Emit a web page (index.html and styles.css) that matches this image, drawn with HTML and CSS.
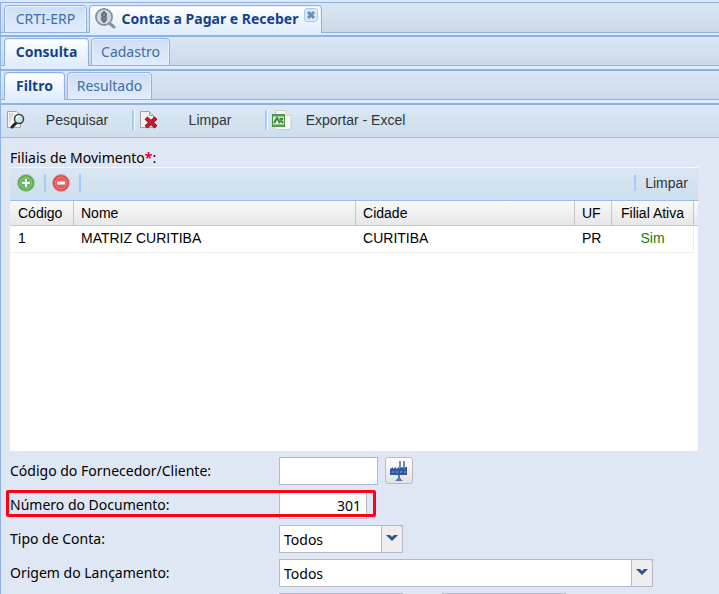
FILE: index.html
```html
<!DOCTYPE html>
<html lang="pt-BR">
  <head>
    <meta charset="UTF-8" />
    <meta name="viewport" content="width=device-width, initial-scale=1.0" />
    <title>CRTI-ERP</title>
    <link rel="stylesheet" href="styles.css">
  </head>
  <body>
    <div class="window">
      <nav class="tabs tabs-main">
        <button type="button" class="tab tab-home">CRTI-ERP</button>
        <div class="tab tab-page active">
          <svg class="tab-icon" width="22" height="22" viewBox="0 0 22 22">
            <path d="M14 14l6 5" stroke="#8b919b" stroke-width="3" stroke-linecap="round" />
            <circle cx="10" cy="9" r="8" fill="#e3e8ee" stroke="#8792a1" stroke-width="2" />
            <circle cx="10" cy="9" r="6" fill="#cbd4de" />
            <path d="M10 3v12" stroke="#63707f" stroke-width="2" />
            <ellipse cx="10" cy="7" rx="2" ry="2" fill="#8a96a4" stroke="#63707f" stroke-width="2" />
            <ellipse cx="10" cy="11" rx="2" ry="2" fill="#8a96a4" stroke="#63707f" stroke-width="2" />
          </svg>
          <button type="button" class="tab-title">Contas a Pagar e Receber</button>
          <button type="button" class="tab-close" aria-label="Fechar">
            <svg width="14" height="14" viewBox="0 0 14 14">
              <rect x="0.500" y="0.500" width="13" height="13" rx="3" fill="#dce9f8" stroke="#a9c6e8" />
              <path d="M4 4l6 6M10 4l-6 6" stroke="#6c8fba" stroke-width="3" />
            </svg>
          </button>
        </div>
      </nav>
      <nav class="tabs">
        <button type="button" class="tab tab-consulta active">Consulta</button>
        <button type="button" class="tab tab-cadastro">Cadastro</button>
      </nav>
      <nav class="tabs">
        <button type="button" class="tab tab-filtro active">Filtro</button>
        <button type="button" class="tab tab-resultado">Resultado</button>
      </nav>

      <div class="toolbar">
        <button type="button" class="tool tool-search">
          <svg width="20" height="20" viewBox="0 0 20 20">
            <path d="M1.500 1.500h9l4 4v12h-13z" fill="#f4f4f4" stroke="#a2a2a2" />
            <path d="M3 15V3h5z" fill="#d9d9d9" />
            <path d="M10 13l-4 4" stroke="#222" stroke-width="3" stroke-linecap="round" />
            <circle cx="13" cy="9" r="4.500" fill="#c4e5f2" stroke="#353b40" stroke-width="1.500" />
            <path d="M10.500 9c0-2 1-3 3-3" fill="none" stroke="#fff" stroke-width="1.500" />
          </svg>
          <span>Pesquisar</span>
        </button>
        <button type="button" class="tool tool-clear">
          <svg width="20" height="20" viewBox="0 0 20 20">
            <path d="M1.500 1.500h9l4 4v12h-13z" fill="#f1f1f1" stroke="#a2a2a2" />
            <path d="M10.500 1.500v4h4" fill="#d6d6d6" stroke="#a2a2a2" />
            <path d="M7 8l10 9M17 8L7 17" stroke="#5c1018" stroke-width="4" />
            <path d="M7 8l10 9M17 8L7 17" stroke="#cf1730" stroke-width="3" />
          </svg>
          <span>Limpar</span>
        </button>
        <button type="button" class="tool tool-excel">
          <svg width="20" height="20" viewBox="0 0 20 20">
            <path d="M4 .5h10l5 5v12q0 2-2 2H5q-2 0-2-2z" fill="#f8f8f6" stroke="#c9c9c7" />
            <path d="M14 .5v5h5" fill="#e8e8e8" stroke="#d2d2d0" />
            <rect x="0.500" y="4.500" width="12" height="12" fill="#dcebd4" stroke="#4d8f43" />
            <path d="M1 5.500h11M1 15.500h11" stroke="#5da053" stroke-width="2" />
            <path d="M2 13l3-5 3 5M7 13l4-5M8 8l3 5" fill="none" stroke="#3f8a3b" stroke-width="2" />
          </svg>
          <span>Exportar - Excel</span>
        </button>
      </div>

      <main class="panel">
        <p class="grid-label">Filiais de Movimento<b class="required">*</b>:</p>
        <section class="grid">
          <div class="grid-toolbar">
            <button type="button" class="round" aria-label="Adicionar">
              <svg width="18" height="18" viewBox="0 0 18 18">
                <circle cx="9" cy="9" r="8.500" fill="#58a94c" stroke="#a6c9a5" />
                <circle cx="9" cy="9" r="6" fill="#6fb862" stroke="#8fcb84" />
                <path d="M9 5v8M5 9h8" stroke="#fff" stroke-width="2" />
              </svg>
            </button>
            <button type="button" class="round" aria-label="Remover">
              <svg width="18" height="18" viewBox="0 0 18 18">
                <circle cx="9" cy="9" r="8.500" fill="#dc4548" stroke="#dca6ae" />
                <circle cx="9" cy="9" r="6" fill="#e95c5d" stroke="#ee8585" />
                <path d="M5 9h8" stroke="#fff" stroke-width="3" />
              </svg>
            </button>
            <button type="button" class="grid-clear">Limpar</button>
          </div>
          <table>
            <colgroup>
              <col class="col-codigo">
              <col class="col-nome">
              <col>
              <col class="col-uf">
              <col class="col-ativa">
              <col class="col-scroll">
            </colgroup>
            <thead>
              <tr>
                <th>Código</th>
                <th>Nome</th>
                <th>Cidade</th>
                <th>UF</th>
                <th class="center">Filial Ativa</th>
                <th></th>
              </tr>
            </thead>
            <tbody>
              <tr>
                <td>1</td>
                <td>MATRIZ CURITIBA</td>
                <td>CURITIBA</td>
                <td>PR</td>
                <td class="center yes">Sim</td>
                <td class="blank"></td>
              </tr>
            </tbody>
          </table>
        </section>

        <form class="filters">
          <div class="field">
            <label for="fornecedor">Código do Fornecedor/Cliente:</label>
            <input type="text" id="fornecedor" class="input-code">
            <button type="button" class="lookup" aria-label="Buscar fornecedor">
              <svg width="20" height="22" viewBox="0 0 20 22">
                <path d="M10 1h2v8h-2zM14 1h2v8h-2z" fill="#6d8cc4" />
                <path d="M1 9l3-2v2l3-2v2l3-2v2l3-2 3 2V7h2v8H1z" fill="#2f57a0" />
                <path d="M3 12h2M7 12h2M11 12h2M15 12h2" stroke="#8fa9d6" stroke-width="1" />
                <path d="M9 15h2v3l3 3H6l3-3z" fill="#5577b5" />
              </svg>
            </button>
          </div>
          <div class="field highlighted">
            <label for="documento">Número do Documento:</label>
            <input type="text" id="documento" class="input-number" value="301">
          </div>
          <div class="field">
            <label for="tipo">Tipo de Conta:</label>
            <div class="combo combo-small">
              <select id="tipo"><option>Todos</option></select>
              <span class="trigger">
                <svg width="12" height="8" viewBox="0 0 12 8"><path d="M0 1h4l2 2 2-2h4L6 7z" fill="#2c5192" /></svg>
              </span>
            </div>
          </div>
          <div class="field">
            <label for="origem">Origem do Lançamento:</label>
            <div class="combo combo-large">
              <select id="origem"><option>Todos</option></select>
              <span class="trigger">
                <svg width="12" height="8" viewBox="0 0 12 8"><path d="M0 1h4l2 2 2-2h4L6 7z" fill="#2c5192" /></svg>
              </span>
            </div>
          </div>
          <div class="field field-range">
            <input type="text" class="input-date" aria-label="Data inicial">
            <input type="text" class="input-date" aria-label="Data final">
          </div>
        </form>
      </main>
    </div>
  </body>
</html>
```
FILE: styles.css
```css
*,
*::after {
  box-sizing: border-box;
}

body {
  margin: 0;
  height: 100vh;
  overflow: hidden;
  background-color: #e0e7f4;
  font-family: "Noto Sans", sans-serif;
  font-size: 14px;
  color: #000;
}

button {
  padding: 0;
  border: none;
  background: none;
  font: inherit;
  color: inherit;
  cursor: pointer;
}

svg {
  display: block;
  flex: none;
}

.window {
  margin-top: 2px;
  border-top: 1px solid #8db2e3;
  border-left: 1px solid #8db2e3;
}

/* Tabs */
.tabs {
  display: flex;
  gap: 2px;
  height: 34px;
  padding: 1px 3px 0;
  border-bottom: 2px solid #8db2e3;
  background: linear-gradient(#dbe6f3, #cbdaeb 28px, #8db2e3 28px, #8db2e3 29px, #deecfd 29px);
}

.tabs-main {
  padding-top: 2px;
  background: linear-gradient(#dbe6f3, #cbdaeb 29px, #8db2e3 29px, #8db2e3 30px, #deecfd 30px);
}

.tab {
  display: flex;
  align-items: center;
  justify-content: center;
  height: 28px;
  padding-bottom: 2px;
  border: 1px solid #8db2e3;
  border-radius: 4px 4px 0 0;
  background: linear-gradient(#cfdff3, #deecfd);
  box-shadow: inset 1px 1px #e8f1fc, inset -1px 0 #e8f1fc;
  color: #416da3;
  white-space: nowrap;
}

.tab.active {
  border-bottom: none;
  background: linear-gradient(#fff, #deecfd);
  color: #15428b;
  font-weight: bold;
}

.tab-home {
  width: 83px;
}

.tab-page {
  width: 233px;
  justify-content: flex-start;
  padding-left: 4px;
}

.tab-title {
  flex: 1;
  text-align: center;
}

.tab-close {
  align-self: flex-start;
  margin: 2px 3px 0 0;
}

.tab-consulta {
  width: 85px;
}

.tab-cadastro {
  width: 79px;
}

.tab-filtro {
  width: 61px;
}

.tab-resultado {
  width: 85px;
}

/* Toolbar */
.toolbar {
  display: flex;
  align-items: center;
  height: 33px;
  padding-bottom: 2px;
  border-bottom: 1px solid #99bce8;
  background: linear-gradient(#dce8f4, #cddeee);
  font-family: "Liberation Sans", Arial, sans-serif;
  color: #333;
}

.tool {
  display: flex;
  align-items: center;
  height: 20px;
}

.tool span {
  flex: 1;
  text-align: center;
}

.tool + .tool {
  padding-left: 5px;
  border-left: 2px solid #a5cafa;
  box-shadow: inset 1px 0 #fff;
}

.tool-search {
  width: 127px;
  padding-left: 5px;
  margin-right: 4px;
}

.tool-clear {
  width: 133px;
  padding-right: 4px;
}

.tool-excel {
  width: 154px;
}

/* Branch grid */
.panel {
  padding: 11px 21px 0 9px;
}

.grid-label {
  margin: 0;
  height: 18px;
  line-height: 18px;
}

.required {
  color: #f00030;
}

.grid {
  height: 284px;
  background-color: #fff;
  font-family: "Liberation Sans", Arial, sans-serif;
}

.grid-toolbar {
  display: flex;
  align-items: center;
  gap: 6px;
  height: 34px;
  padding: 0 0 2px 7px;
  border-top: 1px solid #f2f7fc;
  border-bottom: 1px solid #99bce8;
  background: linear-gradient(#dae6f3, #cddeed);
}

.round {
  padding-right: 9px;
  border-right: 2px solid #a5cafa;
  height: 18px;
}

.grid-clear {
  margin-left: auto;
  padding: 0 10px 0 9px;
  border-left: 2px solid #a5cafa;
  color: #333;
}

table {
  width: 100%;
  table-layout: fixed;
  border-collapse: separate;
  border-spacing: 0;
}

.col-codigo {
  width: 64px;
}

.col-nome {
  width: 41%;
}

.col-uf {
  width: 37px;
}

.col-ativa {
  width: 82px;
}

.col-scroll {
  width: 4px;
}

th,
td {
  padding: 0 7px 1px;
  height: 25px;
  font-weight: normal;
  text-align: left;
  white-space: nowrap;
}

th {
  border-right: 1px solid #c5c5c5;
  border-bottom: 1px solid #c5c5c5;
  background: linear-gradient(#f9f9f9, #e6e7e8);
}

th:last-child {
  padding: 0;
  border-right: none;
}

th:first-child,
td:first-child {
  padding-left: 8px;
}

td {
  height: 27px;
  padding-bottom: 2px;
  border-bottom: 1px solid #ededed;
}

.blank {
  padding: 0;
  border-bottom: none;
}

.center {
  padding-left: 0;
  padding-right: 0;
  text-align: center;
}

.yes {
  border-right: 1px solid #ededed;
  color: #108010;
}

/* Filters */
.filters {
  display: flex;
  flex-direction: column;
  gap: 6px;
  padding-top: 6px;
}

.field {
  display: flex;
  position: relative;
  height: 28px;
}

.field label {
  width: 269px;
  line-height: 28px;
}

input,
select {
  border: 1px solid #b5b8c8;
  border-radius: 0;
  background-color: #fff;
  font: inherit;
  color: inherit;
  padding: 0 5px;
}

select {
  padding: 0 4px;
}

.input-code {
  width: 99px;
}

.input-number {
  width: 88px;
  text-align: right;
}

.lookup {
  display: flex;
  align-items: center;
  justify-content: center;
  width: 28px;
  height: 27px;
  margin-left: 7px;
  border: 1px solid #bbb;
  border-radius: 3px;
  background: linear-gradient(#fff, #e2e2e2);
}

.highlighted::after {
  content: "";
  position: absolute;
  top: -1px;
  left: -4px;
  width: 370px;
  height: 27px;
  border: 3px solid #ff0019;
  border-radius: 2px;
  pointer-events: none;
}

.combo {
  position: relative;
}

.combo select {
  appearance: none;
  width: 100%;
  height: 100%;
}

.combo-small {
  width: 124px;
}

.combo-large {
  width: 374px;
}

/* Arrow button drawn over the select */
.trigger {
  position: absolute;
  top: 0;
  right: 0;
  width: 22px;
  height: 100%;
  padding: 8px 4px;
  border: 1px solid #b5b8c8;
  border-radius: 0 3px 0 0;
  background-color: #eee;
  pointer-events: none;
}

.field-range {
  gap: 39px;
  padding-left: 269px;
}

.input-date {
  width: 124px;
}
```
